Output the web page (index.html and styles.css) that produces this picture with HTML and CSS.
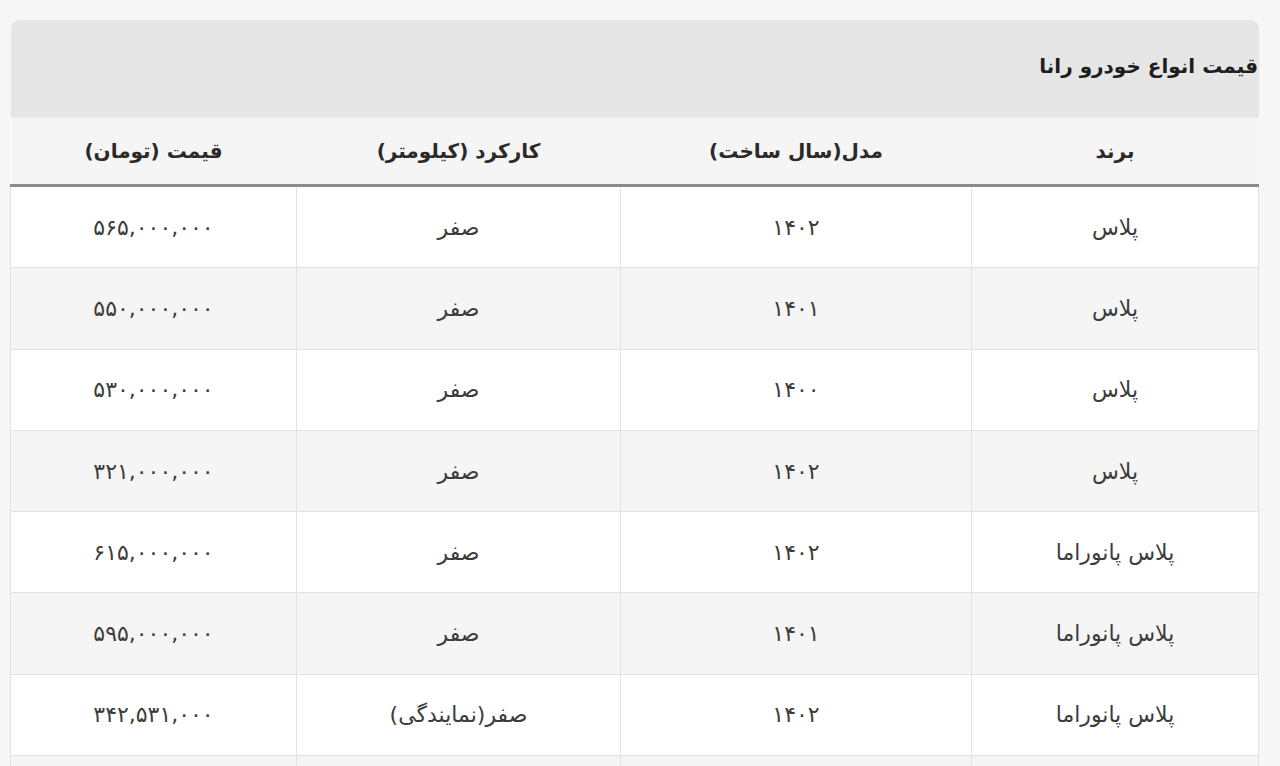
FILE: index.html
```html
<!DOCTYPE html>
<html lang="fa" dir="rtl">
<head>
<meta charset="utf-8">
<link rel="stylesheet" href="styles.css">
</head>
<body>
<div class="wrap">
  <div class="caption">قیمت انواع خودرو رانا</div>
  <table class="prices">
    <thead>
      <tr>
        <th class="c-brand">برند</th>
        <th class="c-model">مدل(سال ساخت)</th>
        <th class="c-km">کارکرد (کیلومتر)</th>
        <th class="c-price">قیمت (تومان)</th>
      </tr>
    </thead>
    <tbody>
      <tr><td>پلاس</td><td>۱۴۰۲</td><td>صفر</td><td>۵۶۵,۰۰۰,۰۰۰</td></tr>
      <tr><td>پلاس</td><td>۱۴۰۱</td><td>صفر</td><td>۵۵۰,۰۰۰,۰۰۰</td></tr>
      <tr><td>پلاس</td><td>۱۴۰۰</td><td>صفر</td><td>۵۳۰,۰۰۰,۰۰۰</td></tr>
      <tr><td>پلاس</td><td>۱۴۰۲</td><td>صفر</td><td>۳۲۱,۰۰۰,۰۰۰</td></tr>
      <tr><td>پلاس پانوراما</td><td>۱۴۰۲</td><td>صفر</td><td>۶۱۵,۰۰۰,۰۰۰</td></tr>
      <tr><td>پلاس پانوراما</td><td>۱۴۰۱</td><td>صفر</td><td>۵۹۵,۰۰۰,۰۰۰</td></tr>
      <tr><td>پلاس پانوراما</td><td>۱۴۰۲</td><td>صفر(نمایندگی)</td><td>۳۴۲,۵۳۱,۰۰۰</td></tr>
      <tr class="partial"><td></td><td></td><td></td><td></td></tr>
    </tbody>
  </table>
</div>
</body>
</html>
```
FILE: styles.css
```css
html, body {
  margin: 0;
  padding: 0;
  background: #f6f6f6;
  height: 766px;
  overflow: hidden;
}
body {
  font-family: "DejaVu Sans", "Noto Sans", sans-serif;
  color: #3a3a3a;
}
.wrap {
  margin: 0 21px 0 11px;
  padding-top: 20px;
}
.caption {
  background: #e6e6e6;
  border-radius: 9px 9px 0 0;
  height: 91px;
  padding: 0 1px 6px 0;
  display: flex;
  align-items: center;
  font-weight: bold;
  font-size: 20px;
  color: #1e1e1e;
}
.prices {
  width: 100%;
  border-collapse: collapse;
  table-layout: fixed;
  background: #fff;
}
.prices th {
  height: 66px;
  background: #f5f5f5;
  font-weight: bold;
  font-size: 20px;
  color: #2a2a2a;
  border-bottom: 3px solid #8a8a8a;
  border-top: 1px solid #ececec;
  padding: 0;
}
.c-brand { width: 287px; }
.c-model { width: 351px; }
.c-km { width: 324px; }
.c-price { width: 286px; }
.prices td {
  height: 80.3px;
  text-align: center;
  font-size: 22px;
  color: #3c3c3c;
  border: 1px solid #e2e2e2;
  padding: 0;
}
.prices tbody tr:nth-child(even) td {
  background: #f5f5f5;
}
```
